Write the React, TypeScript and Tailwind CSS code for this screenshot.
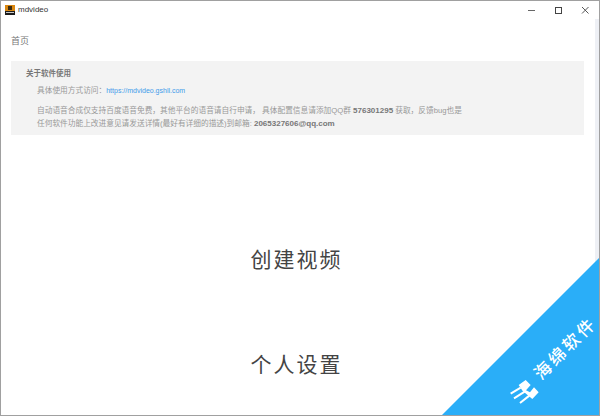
const CJK = "font-['Liberation_Sans','Noto_Sans_CJK_SC',sans-serif]"

const AppIcon = () => (
  <svg width="10" height="10" viewBox="0 0 10 10">
    <rect width="10" height="10" fill="#1c1c1c" />
    <rect width="10" height="6" fill="#d9860f" />
    <rect x="3" y="1" width="4" height="4" fill="#3a2a10" />
    <rect x="1" y="7" width="8" height="1" fill="#c8c8c8" />
  </svg>
)

const WindowButtons = () => (
  <div className="flex items-center">
    <svg width="27" height="18" viewBox="0 0 27 18" stroke="#666" fill="none">
      <path d="M10 9.5h7" />
    </svg>
    <svg width="27" height="18" viewBox="0 0 27 18" stroke="#444" fill="none">
      <rect x="10.5" y="6.5" width="6" height="6" />
    </svg>
    <svg width="27" height="18" viewBox="0 0 27 18" stroke="#555" fill="none">
      <path d="M10 6l6.5 6.5M16.5 6L10 12.5" />
    </svg>
  </div>
)

const Watermark = () => (
  <div className="absolute right-0 bottom-0 w-[157px] h-[157px]">
    <svg width="157" height="157" viewBox="0 0 157 157" className="absolute inset-0">
      <polygon points="0,157 157,0 157,157" fill="#2aaef8" />
      <g transform="translate(62 81) scale(0.3333)" fill="#fff">
        <path d="M44 138L65 123L80 138L66 154L78 160L90 145L104 160L85 180L68 166L56 156Z" />
        <g stroke="#fff" strokeWidth="6" fill="none">
          <path d="M20 164L50 146M30 178L62 158M48 192L76 170" />
        </g>
      </g>
    </svg>
    <span className={`absolute left-[124px] top-[81px] text-[17px] leading-[20px] tracking-[3px] font-medium text-white -rotate-45 -translate-x-1/2 whitespace-nowrap ${CJK}`}>海绵软件</span>
  </div>
)

export default function App() {
  return (
    <div className={`relative w-[600px] h-[416px] overflow-hidden bg-white border border-[#a0a0a0] ${CJK}`}>
      <div className="flex items-center justify-between h-[18px] pl-[4px]">
        <div className="flex items-center gap-[3px]">
          <AppIcon />
          <span className="text-[8px] text-[#333]">mdvideo</span>
        </div>
        <WindowButtons />
      </div>
      <div className="flex h-[396px]">
        <div className="flex-1 pl-[10px] pr-[11px] overflow-hidden">
          <div className="pt-[16px] text-[9px] leading-[12px] text-[#777]">首页</div>
          <div className="mt-[14px] h-[74px] bg-[#f3f3f3] pl-[15px] pt-[7px] text-[7.7px] text-[#999]">
            <div className="font-bold text-[7.5px] leading-[11px] text-[#777]">关于软件使用</div>
            <div className="mt-[6px] pl-[11px] leading-[12px]">
              具体使用方式访问：<span className="text-[7px] text-[#3f9bea]">https://mdvideo.gshll.com</span>
            </div>
            <div className="mt-[7px] pl-[11px] leading-[13px]">
              <div>
                自动语音合成仅支持百度语音免费，其他平台的语音请自行申请， 具体配置信息请添加QQ群 <b className="text-[8px] text-[#777]">576301295</b> 获取，反馈bug也是
              </div>
              <div>
                任何软件功能上改进意见请发送详情(最好有详细的描述)到邮箱: <b className="text-[8px] text-[#777]">2065327606@qq.com</b>
              </div>
            </div>
          </div>
          <div className="flex flex-col items-center pt-[112px] pr-[2px] gap-[79px] text-[21px] leading-[26px] tracking-[2px] text-[#444]">
            <div>创建视频</div>
            <div>个人设置</div>
          </div>
        </div>
        <div className="w-[4px] bg-[#eef0f5]" />
      </div>
      <Watermark />
    </div>
  )
}
